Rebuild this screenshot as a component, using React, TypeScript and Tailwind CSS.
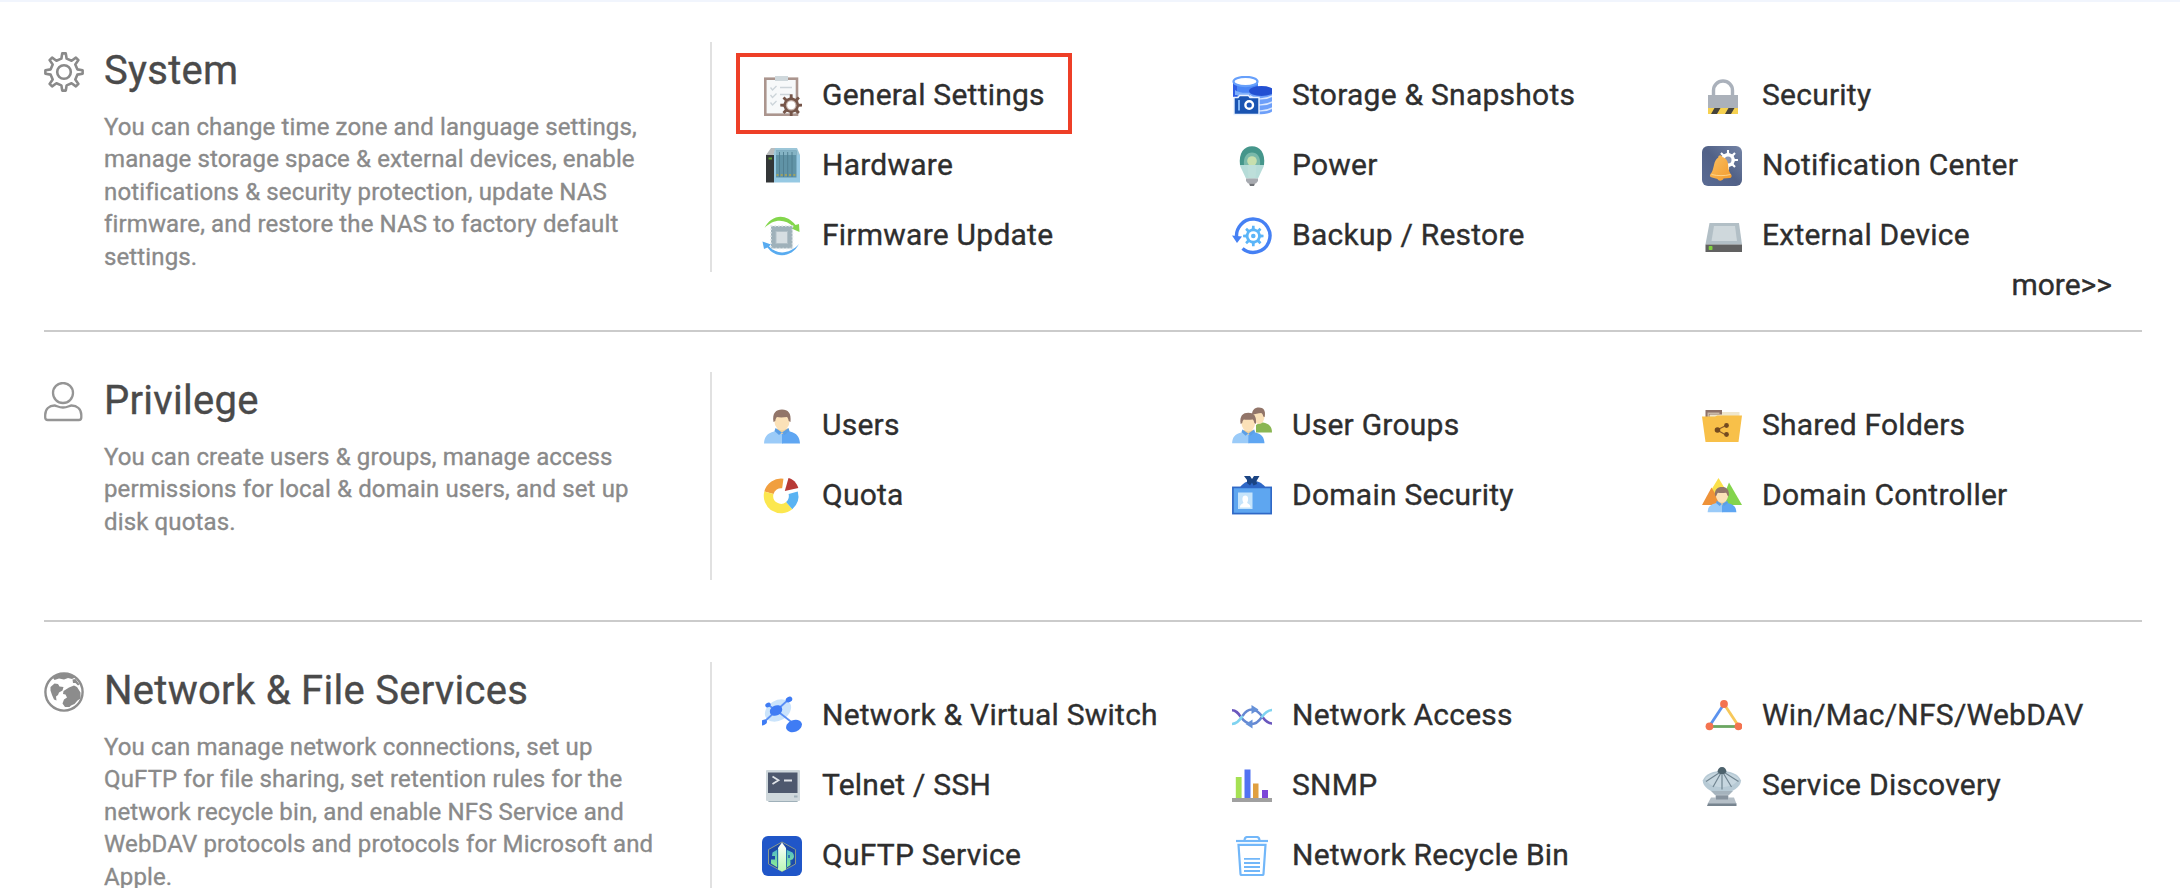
import React from "react";

/* ---------- drawing helpers ---------- */

function gear(cx: number, cy: number, outer: number, inner: number, teeth: number, tip = 0.2, root = 0.3) {
  const step = (Math.PI * 2) / teeth;
  const pts: string[] = [];
  for (let i = 0; i < teeth; i++) {
    const a = i * step - Math.PI / 2;
    const at = (r: number, d: number) =>
      `${(cx + r * Math.cos(a + d * step)).toFixed(2)} ${(cy + r * Math.sin(a + d * step)).toFixed(2)}`;
    pts.push(at(inner, -root), at(outer, -tip), at(outer, tip), at(inner, root));
  }
  return `M${pts.join("L")}Z`;
}

function Svg({ children }: { children: React.ReactNode }) {
  return (
    <svg viewBox="0 0 40 40" className="size-10 shrink-0" aria-hidden="true">
      {children}
    </svg>
  );
}

/* ---------- section icons ---------- */

const SystemIcon = () => (
  <Svg>
    <g fill="none" stroke="#8a8a8a" strokeWidth="2.6" strokeLinejoin="round">
      <path d={gear(20, 20, 18.7, 13.6, 8, 0.12, 0.25)} />
      <circle cx="20" cy="20" r="6.800" />
    </g>
  </Svg>
);

const PrivilegeIcon = () => (
  <Svg>
    <g fill="none" stroke="#959595" strokeWidth="2.3" strokeLinejoin="round">
      <ellipse cx="19" cy="11" rx="10" ry="10" />
      <path d="M1.200 33c0-6 4-9.500 9.300-9.500 2 0 4 2 8.500 2s6.500-2 8.500-2c5.500 0 9.800 3.500 9.800 9.500v2.500c0 1.600-1 2.500-2.500 2.500h-31.100c-1.500 0-2.500-.9-2.500-2.500z" />
    </g>
  </Svg>
);

const NetworkSectionIcon = () => (
  <Svg>
    <circle cx="20" cy="20" r="18.600" fill="#fff" stroke="#8e8e8e" strokeWidth="2.400" />
    <g fill="#8c8c8c">
      <path d="M9 6C15 .5 25 .5 31 5.500l-3 1.500-4-1-4 1.500-5-1-4.500 1.500z" />
      <path d="M6.500 15l4-3.500 3.500.5 1.500 2.500 4 .5-1 3.500-3.500 2-1 2.500-2 1.500.5 4-2.500-1-2-4.500-1.500-4.500z" />
      <path d="M25 15.500l5-2 3 1.500 3.500 5.500v6l-3 2-3 3.500-3.500 1.500-1.500 1.500-4.500 0-2.500-3.500 1.500-4 3-2-1.500-3-2.500-.5.500-3z" />
      <path d="M28.500 7.500l3-.5 4 5.500-1.500 1-2.500-2.500-2.500 0z" />
    </g>
  </Svg>
);

/* ---------- feature icons ---------- */

const GeneralIcon = () => (
  <Svg>
    <rect x="3.300" y="2.700" width="31.700" height="36" fill="#f7f9fa" stroke="#ab958e" strokeWidth="2.600" />
    <rect x="13" y="0" width="13" height="5" fill="#cfd8dc" />
    <g fill="none" stroke="#ccd4d9" strokeWidth="1.300">
      <path d="M8.500 11.500l2 2.500 4-4M8.500 19l2 2.500 4-4M8.500 26.500l2 2.500 4-4" />
      <path d="M18 11.500h12M18 18.500h10" strokeWidth="1.600" />
    </g>
    <path d={gear(29.2, 29.2, 11, 7.8, 8, 0.16, 0.24)} fill="#755549" />
    <circle cx="29.200" cy="29.200" r="5.300" fill="#c7b5ae" />
    <circle cx="29.200" cy="29.200" r="4" fill="#fff" />
  </Svg>
);

const HardwareIcon = () => (
  <Svg>
    <path d="M4 9l5-7h5l-2.500 7z" fill="#b9bcbd" />
    <path d="M11.500 9l1.500-7h22l3 7z" fill="#9cc6d8" />
    <path d="M4 9h8v27.500h-8z" fill="#333638" />
    <rect x="6.500" y="11.500" width="3.500" height="2" fill="#5f9e2b" />
    <path d="M12 9h26v27.500h-26z" fill="#96c9e3" />
    <path d="M14 4.500h20.500v27h-20.500z" fill="#6093a6" />
    <path d="M14 4.500h20.500v4.500h-20.500z" fill="#84b3c4" />
    <path d="M17.500 6v25M21.500 6v25M25.700 6v25M30 6v25" stroke="#4f7d8e" strokeWidth=".9" />
    <path d="M14.500 29h20" stroke="#b5a84a" strokeWidth="1.600" strokeDasharray="2 2.200" />
  </Svg>
);

const FirmwareIcon = () => (
  <Svg>
    <path d="M2.500 12C9-1.500 24-3.500 33.500 9l3.500-1 .5 8-8-3.500 2-1.500C23 2 11 3 2.500 12z" fill="#83d64c" />
    <path d="M37 28C30 41.500 14 43 5.500 31.500L2 33 .5 25.500l8.500 3-2 1.800C15 39.500 28 38 37 28z" fill="#58abf0" />
    <rect x="9" y="10" width="21.500" height="22.500" fill="#9fb1ba" />
    <rect x="9" y="10" width="21.500" height="22.500" fill="none" stroke="#dfe6e9" strokeWidth="1.600" strokeDasharray="1.600 1.900" />
    <rect x="14" y="15.500" width="11.500" height="12" fill="#d6dee2" stroke="#b2c0c7" />
  </Svg>
);

const StorageIcon = () => (
  <Svg>
    <path d="M1 5v16h25V5z" fill="#4a86f6" />
    <path d="M1 5v16h4V8z" fill="#2f5de4" />
    <path d="M3 14c4 3.500 16 4 23 0v5H3z" fill="#7fb0fb" />
    <ellipse cx="13.500" cy="5.500" rx="12" ry="4.600" fill="#fff" stroke="#67a0fb" strokeWidth="2.200" />
    <path d="M17.500 15v20c3 4 19 4.500 23 0V15z" fill="#6d9ff9" />
    <path d="M18 19.500c4 5 17 4 23 0M18 25.500c4 5 17 4 23 0M18 31.500c4 5 17 4 23 0" fill="none" stroke="#dbe8ff" strokeWidth="1.400" />
    <ellipse cx="29.500" cy="15" rx="12.500" ry="5" fill="#2350d2" />
    <path d="M2 21.500h4l1.500-2h9l1.500 2h9v17H2z" fill="#1a54b2" stroke="#eaf2ff" strokeWidth="1.400" />
    <path d="M7 24v10.500" stroke="#7fb4f5" strokeWidth="2" />
    <circle cx="17.200" cy="29" r="3.800" fill="#1b55b8" stroke="#fff" strokeWidth="2.400" />
  </Svg>
);

const SecurityIcon = () => (
  <Svg>
    <path d="M11.500 20v-5.500a9.500 9.500 0 0 1 19 0V20" fill="none" stroke="#aab1bb" strokeWidth="3.400" />
    <rect x="6" y="19" width="30" height="13.500" fill="#abb1ba" />
    <rect x="6" y="32" width="30" height="6" fill="#f6d150" />
    <path d="M12.500 32h6l-3.500 6h-6zM26.500 32h6l-3.500 6h-6z" fill="#45423c" />
  </Svg>
);

const PowerIcon = () => (
  <Svg>
    <path d="M8 14v4.500c0 2 1 3.500 2 5.500l4 8.500h12l4-8.500c1-2 2-3.500 2-5.500V14z" fill="#b6dcd8" />
    <path d="M8 19C6.500 7 12 .3 20 .3S33.500 7 32 19z" fill="#45968b" />
    <path d="M12 19c-1-8 3-12.500 8-12.500S29 11 28 19z" fill="#7ab9aa" />
    <circle cx="20" cy="15" r="4.800" fill="#c7dfae" />
    <path d="M15.500 19h9l-1 13.500h-7z" fill="#bddfda" />
    <path d="M14 32.500h12v2.500l-2 2.500h-8L14 35z" fill="#a7aab0" />
    <path d="M17 37.500h6l-1 2.500h-4z" fill="#707378" />
  </Svg>
);

const NotificationIcon = () => (
  <Svg>
    <defs>
      <linearGradient id="ncBg" x1="0" y1="1" x2="1" y2="0">
        <stop offset="0" stopColor="#5a6b94" />
        <stop offset=".5" stopColor="#516187" />
        <stop offset="1" stopColor="#7484a6" />
      </linearGradient>
      <linearGradient id="ncBell" x1="0" y1="0" x2="1" y2="1">
        <stop offset="0" stopColor="#fbc062" />
        <stop offset="1" stopColor="#f29a2c" />
      </linearGradient>
    </defs>
    <rect width="40" height="40" rx="6" fill="url(#ncBg)" />
    <path d={gear(26, 14, 10, 7, 8, 0.13, 0.2)} fill="#fff" />
    <circle cx="26" cy="14" r="3.500" fill="#8a96b3" />
    <path
      d="M17.500 9.500c1.500-.5 2.500.5 2.700 1.500 4.300 1 5.800 4.500 6 8.500.2 4.500 1.300 7 3 9 1 1.500.3 3.500-1.500 3.500l-6.200.5c-.7 2.500-5 3-6 .6L10 31.500c-2-.2-2.800-2-1.500-3.500 2-2 2.500-5 3.500-9 .7-3.500 2-6 4.300-7.500 0-1 .2-1.700 1.200-2z"
      fill="url(#ncBell)"
    />
    <path d="M9.500 28.500c6 1.500 13 1.500 19 0" fill="none" stroke="#ffd48a" strokeWidth="1" />
  </Svg>
);

const BackupIcon = () => (
  <Svg>
    <path d="M5 23.500A16.700 16.700 0 1 1 10.500 32.500" fill="none" stroke="#4580f4" strokeWidth="3.400" />
    <path d="M0 19.500l10 1L5 27z" fill="#4580f4" />
    <path d={gear(21.3, 20, 10.3, 7.6, 8, 0.16, 0.24)} fill="#5bb5f8" />
    <circle cx="21.300" cy="20" r="4.800" fill="#fff" />
    <circle cx="21.300" cy="20" r="2.300" fill="#5bb5f8" />
  </Svg>
);

const ExternalIcon = () => (
  <Svg>
    <path d="M7.500 7h29.500l3 21.500H3.500z" fill="#b2bfc6" />
    <path d="M12 10h21l2 15H9.500z" fill="#cfd8dc" />
    <rect x="3.500" y="28.500" width="36.500" height="7.500" fill="#616161" />
    <rect x="6.700" y="30" width="3.800" height="4" rx=".8" fill="#80d13f" />
  </Svg>
);

function Bust() {
  return (
    <>
      <path d="M2 37.500c.5-7 3-10 10-12l6-3.500h2l1 15.500z" fill="#9bcbf8" />
      <path d="M38 37.500c-.5-7-3-10-10-12l-6-3.500h-2v15.500z" fill="#5fa6f2" />
      <path d="M14.500 22.500h12l-1.500 4-5 1.500-4-1.500z" fill="#f2d19a" />
      <path d="M13.500 22l-1 3 4.500 4 3-2.500zM26.500 22l1 3-5 4-2.500-2.500z" fill="#5b9fe6" />
      <ellipse cx="20" cy="15" rx="7.600" ry="9.200" fill="#fbe1b8" />
      <path d="M11.500 16C10 7 14 3.500 20 3.500S29.500 7 28.500 16l-1.800-1c-.3-2-.7-3-1.700-4-4 .5-8 .5-10 0-1 1-1.500 2-1.700 4z" fill="#927569" />
    </>
  );
}

const UsersIcon = () => (
  <Svg>
    <Bust />
  </Svg>
);

const GroupsIcon = () => (
  <Svg>
    <path d="M24 26.500v-7.500l4-2.500h3c6 1 9 4 9 10z" fill="#8ab653" />
    <ellipse cx="27" cy="10.500" rx="5.500" ry="7.500" fill="#fbe1b8" />
    <path d="M20 9c0-5 2.500-7.500 7-7.500s7 3 5.700 9.500l-1.500-.5c-.2-2-1-3-2-3.500-3 .5-6 .5-9.200 2z" fill="#927569" />
    <g transform="translate(-1.700 3.600) scale(.9)">
      <Bust />
    </g>
  </Svg>
);

const FolderIcon = () => (
  <Svg>
    <path d="M6.500 6h31v12h-31z" fill="#efe6cc" />
    <path d="M3.500 16V4h16.500v4.500H7.500V16z" fill="#8d7169" />
    <path d="M5.500 16V6.500h12V8H7V16z" fill="#c9b8a5" />
    <path d="M0 10.500h13l2.500-1h24.500l-3.500 26.500H3.500z" fill="#f8c049" />
    <path d="M24 19.500l-9 4.500 9 5" fill="none" stroke="#8a5a2a" strokeWidth="1.200" />
    <circle cx="15.500" cy="24" r="2.800" fill="#734a20" />
    <circle cx="24.500" cy="19.500" r="2.400" fill="#734a20" />
    <circle cx="24.500" cy="28.500" r="2.400" fill="#734a20" />
  </Svg>
);

const QuotaIcon = () => (
  <Svg>
    <g fill="none" strokeWidth="9.500">
      <path d="M6.900 16.800A12.600 12.600 0 0 1 20.800 7.500" stroke="#f19f3f" />
      <path d="M6.900 16.800A12.600 12.600 0 0 0 27.200 29.600" stroke="#fce74f" />
      <path d="M27.200 29.600A12.600 12.600 0 0 0 31.200 16.800" stroke="#5ab3f2" />
    </g>
    <path d="M26.500 2c4.500 1 8 4.500 9.800 10L22.800 15z" fill="#b83a36" />
  </Svg>
);

const DomainSecurityIcon = () => (
  <Svg>
    <path d="M8 11.500c1-2 4-5 7.500-6h10c3.500 1 7 4 8 6z" fill="#2f68c6" />
    <path d="M12 0h6l2 3 2-3h5.500l-3 5 .5 3-3.500 1.500-1.500-3-2 3-3-2.500v-3z" fill="#1b4483" />
    <rect x=".9" y="11.400" width="38.300" height="26.200" fill="#5ea6f0" stroke="#2f68c6" strokeWidth="1.700" />
    <rect x="6" y="16.500" width="14.500" height="16.500" fill="#c5e4fb" />
    <path d="M8 31.500c0-3 2-3.500 3.500-4.500-2-4-1-7.500 1.800-7.500s3.800 3.500 1.800 7.500c1.500 1 3.400 1.500 3.400 4.500z" fill="#fff" />
  </Svg>
);

const DomainControllerIcon = () => (
  <Svg>
    <path d="M16.500 2l11 18h-22z" fill="#fbe04a" />
    <path d="M9.500 11.500L20 29H0z" fill="#ee9239" />
    <path d="M27 6.500L40 29H18z" fill="#84d44c" />
    <g transform="translate(4 8.500) scale(.8 .74)">
      <Bust />
    </g>
  </Svg>
);

const SwitchIcon = () => (
  <Svg>
    <ellipse cx="16" cy="14.500" rx="14" ry="10" transform="rotate(-30 16 14.500)" fill="#cbe4fb" />
    <path d="M2 26L27 3M6 9l8 5M14 14l18 14" fill="none" stroke="#5a90f5" strokeWidth="1.800" />
    <ellipse cx="14" cy="14.500" rx="6.500" ry="5" transform="rotate(-25 14 14.500)" fill="#3f7cf4" />
    <ellipse cx="27" cy="3.500" rx="3.400" ry="2.700" transform="rotate(-30 27 3.500)" fill="#3f7cf4" />
    <ellipse cx="6" cy="9" rx="2.800" ry="2.200" transform="rotate(-25 6 9)" fill="#3f7cf4" />
    <ellipse cx="1.500" cy="26.500" rx="3.600" ry="2.600" transform="rotate(-25 1.500 26.500)" fill="#3f7cf4" />
    <ellipse cx="32" cy="30" rx="8.200" ry="5.800" transform="rotate(-22 32 30)" fill="#3f7cf4" />
  </Svg>
);

const AccessIcon = () => (
  <Svg>
    <g fill="none" strokeWidth="2.600">
      <path d="M0 14.300C4 14.300 6 17 8.500 20.500" stroke="#6a57bd" />
      <path d="M8.500 20.500C12 25.500 15 28 20 28c4.500 0 7-3 9.500-6.500" stroke="#6588d2" />
      <path d="M10.500 20C13 16 16 13.500 20 13.500c5 0 8 4 10.500 7.500" stroke="#6588d2" />
      <path d="M30.500 21c2.500 3.500 5 6.300 9.500 6.500" stroke="#6a57bd" />
      <path d="M0 28c5-.2 8-4 10.500-8" stroke="#7fd3f0" />
      <path d="M29.500 21.500C32.500 17 35 14.300 40 14" stroke="#7fd3f0" />
    </g>
    <path d="M19.500 9l7 4.500-7 4.500zM20.500 32.500l-7-4.500 7-4.500z" fill="#6691d8" />
  </Svg>
);

const WinMacIcon = () => (
  <Svg>
    <g strokeWidth="2.800" fill="none">
      <path d="M22 8L7.500 30" stroke="#5b92ee" />
      <path d="M22 8l14.500 22" stroke="#f7c85a" />
      <path d="M7.500 30.500h29" stroke="#6ba661" />
    </g>
    <circle cx="22" cy="8" r="3.900" fill="#f4734f" />
    <circle cx="7.500" cy="30.300" r="3.900" fill="#f4734f" />
    <circle cx="36.500" cy="30.300" r="3.900" fill="#f4734f" />
  </Svg>
);

const TelnetIcon = () => (
  <Svg>
    <rect x="6" y="32" width="30" height="4" rx="1.500" fill="#9fb0b9" />
    <rect x="4" y="4" width="34" height="31" rx="1" fill="#cfd8dc" />
    <rect x="6" y="6.500" width="29.500" height="20.500" fill="#4e596e" />
    <path d="M10.500 10.500l6 3.800-6 3.800M22 14.500h8" fill="none" stroke="#dfe3e7" strokeWidth="1.800" />
    <rect x="32" y="29.500" width="3.500" height="2" fill="#9fb0b9" />
  </Svg>
);

const SnmpIcon = () => (
  <Svg>
    <rect x="0" y="32" width="40" height="4" fill="#a0a0a0" />
    <rect x="3.800" y="11" width="5.800" height="21" fill="#a5e153" />
    <rect x="12.500" y="3.500" width="6" height="28.500" fill="#5172f2" />
    <rect x="21" y="17.500" width="5.500" height="14.500" fill="#e0a040" />
    <rect x="30" y="24" width="6" height="8" fill="#7c46d8" />
  </Svg>
);

const DiscoveryIcon = () => (
  <Svg>
    <path d="M.7 14.500C4 7 12 5 19.500 5S36 7 39 14.500c0 6-8 12.500-19.500 12.500S.7 20.500.7 14.500z" fill="#b7cad5" />
    <path d="M3 13C7 8 13 6.500 19.500 6.500S33 8 37 13c-4 6-10 8-17.500 8S7 19 3 13z" fill="#c6d6df" />
    <path d="M20 5L4 15.500M20 5l-9 16M20 5v18.500M20 5l9.500 16M20 5l16.500 10.500" fill="none" stroke="#718591" strokeWidth="1.200" />
    <path d="M15.500 6c0-3 2-5 4.500-5s4.500 2 4.500 5l-2.500 2h-4z" fill="#4d626c" />
    <path d="M9 25h22l-4 4H13z" fill="#a5b3bd" />
    <path d="M9 31.500h4.500v-3h13v3h5.500l2.500 6.500H5.500z" fill="#b5bfc7" />
    <path d="M14 29.500h12v4H14z" fill="#87939e" />
    <path d="M6 37.500h28.500V40H5z" fill="#77848f" />
  </Svg>
);

const QuFtpIcon = () => (
  <Svg>
    <defs>
      <linearGradient id="ftpGreen" x1="0" y1="0" x2="0" y2="1">
        <stop offset="0" stopColor="#4fb9c9" />
        <stop offset="1" stopColor="#8ff08f" />
      </linearGradient>
      <linearGradient id="ftpWhite" x1="0" y1="0" x2="0" y2="1">
        <stop offset="0" stopColor="#ffffff" />
        <stop offset="1" stopColor="#b8f7b4" />
      </linearGradient>
    </defs>
    <rect width="40" height="40" rx="6" fill="#2056c8" />
    <path d="M20 6l13.500 7.500v14.500L20 35.500 6.500 28V13.500z" fill="#1c49a8" stroke="#8a9a8d" strokeWidth="1" />
    <path d="M10.500 16.500l5-3V31.500l-6.500-4V23.500h4V20H10z" fill="url(#ftpGreen)" />
    <path d="M24 13.500l6.500 3c2 2.500 2 5 0 7l-2 .5v5l-4.500 3z" fill="url(#ftpGreen)" />
    <path d="M20 6.500l4 5.500v21.500l-4 2-4-2v-21.500z" fill="url(#ftpWhite)" />
    <path d="M15.700 13v18.500M24.500 13v18.500" stroke="#1c6aa8" strokeWidth=".9" />
    <path d="M27 19v3M29.500 24v3" stroke="#1c5ab0" strokeWidth="1.400" />
  </Svg>
);

const RecycleIcon = () => (
  <Svg>
    <g fill="none" stroke="#72b7f9" strokeWidth="2.200">
      <path d="M4 5h32" />
      <path d="M12.500 5c0-3 1-4 3-4h9c2 0 3 1 3 4" />
      <path d="M6.500 8.800h27L31.500 38c0 .7-.5 1-1 1h-21c-.5 0-1-.3-1-1z" />
      <path d="M12 22.800h16M12 27h16M12 31h16M12 35h16" strokeWidth="1.800" />
    </g>
  </Svg>
);

/* ---------- data ---------- */

type Item = { label: string; Icon: React.FC; active?: boolean };
type SectionData = {
  title: string;
  Icon: React.FC;
  text: string[];
  height: string;
  items: Item[];
  more?: boolean;
};

const sections: SectionData[] = [
  {
    title: "System",
    Icon: SystemIcon,
    height: "h-[230px]",
    text: [
      "You can change time zone and language settings,",
      "manage storage space & external devices, enable",
      "notifications & security protection, update NAS",
      "firmware, and restore the NAS to factory default",
      "settings.",
    ],
    items: [
      { label: "General Settings", Icon: GeneralIcon, active: true },
      { label: "Storage & Snapshots", Icon: StorageIcon },
      { label: "Security", Icon: SecurityIcon },
      { label: "Hardware", Icon: HardwareIcon },
      { label: "Power", Icon: PowerIcon },
      { label: "Notification Center", Icon: NotificationIcon },
      { label: "Firmware Update", Icon: FirmwareIcon },
      { label: "Backup / Restore", Icon: BackupIcon },
      { label: "External Device", Icon: ExternalIcon },
    ],
    more: true,
  },
  {
    title: "Privilege",
    Icon: PrivilegeIcon,
    height: "h-[208px]",
    text: [
      "You can create users & groups, manage access",
      "permissions for local & domain users, and set up",
      "disk quotas.",
    ],
    items: [
      { label: "Users", Icon: UsersIcon },
      { label: "User Groups", Icon: GroupsIcon },
      { label: "Shared Folders", Icon: FolderIcon },
      { label: "Quota", Icon: QuotaIcon },
      { label: "Domain Security", Icon: DomainSecurityIcon },
      { label: "Domain Controller", Icon: DomainControllerIcon },
    ],
  },
  {
    title: "Network & File Services",
    Icon: NetworkSectionIcon,
    height: "h-[230px]",
    text: [
      "You can manage network connections, set up",
      "QuFTP for file sharing, set retention rules for the",
      "network recycle bin, and enable NFS Service and",
      "WebDAV protocols and protocols for Microsoft and",
      "Apple.",
    ],
    items: [
      { label: "Network & Virtual Switch", Icon: SwitchIcon },
      { label: "Network Access", Icon: AccessIcon },
      { label: "Win/Mac/NFS/WebDAV", Icon: WinMacIcon },
      { label: "Telnet / SSH", Icon: TelnetIcon },
      { label: "SNMP", Icon: SnmpIcon },
      { label: "Service Discovery", Icon: DiscoveryIcon },
      { label: "QuFTP Service", Icon: QuFtpIcon },
      { label: "Network Recycle Bin", Icon: RecycleIcon },
    ],
  },
];

/* ---------- page ---------- */

function FeatureLink({ label, Icon, active }: Item) {
  return (
    <li className="relative flex h-[70px] items-center gap-5">
      {active && (
        <span className="pointer-events-none absolute -top-2 -left-[26px] h-[81px] w-[336px] border-4 border-[#ee3f27]" />
      )}
      <Icon />
      <a href="#" className="-mt-1 text-[30px] leading-[35px] tracking-[0.24px] whitespace-nowrap text-[#2e2e2e]">
        {label}
      </a>
    </li>
  );
}

function Section({ title, Icon, text, height, items, more }: SectionData) {
  return (
    <section className="mr-[38px] ml-11 flex h-[290px] shrink-0 border-b-2 border-[#cbcbcb] pt-10 first:h-[330px] last:h-[330px]">
      <div className={`${height} flex w-[668px] shrink-0 gap-5 border-r-2 border-[#e1e1e1] pt-2.5`}>
        <Icon />
        <div>
          <h2 className="-mt-px text-[40px] leading-10 tracking-[0.28px] text-[#4a4a4a]">{title}</h2>
          <p className="mt-[19.500px] text-[24px] leading-[32.6px] tracking-[0.13px] whitespace-nowrap text-[#8a8a8a]">
            {text.map((line) => (
              <span key={line} className="block">
                {line}
              </span>
            ))}
          </p>
        </div>
      </div>
      <div className="grow pt-[19px] pl-[50px]">
        <ul className="grid grid-cols-[470px_470px_1fr]">
          {items.map((item) => (
            <FeatureLink key={item.label} {...item} />
          ))}
        </ul>
        {more && (
          <a href="#" className="block pr-[30px] text-right text-[30px] leading-7 text-[#2e2e2e]">
            more&gt;&gt;
          </a>
        )}
      </div>
    </section>
  );
}

export default function App() {
  return (
    <div className="flex h-[888px] w-[2180px] flex-col overflow-hidden border-t-2 border-[#f1f5fd] bg-white font-['Roboto',sans-serif] [-webkit-text-stroke:0.35px_currentColor]">
      <main className="flex flex-col">
        {sections.map((s) => (
          <Section key={s.title} {...s} />
        ))}
      </main>
    </div>
  );
}
